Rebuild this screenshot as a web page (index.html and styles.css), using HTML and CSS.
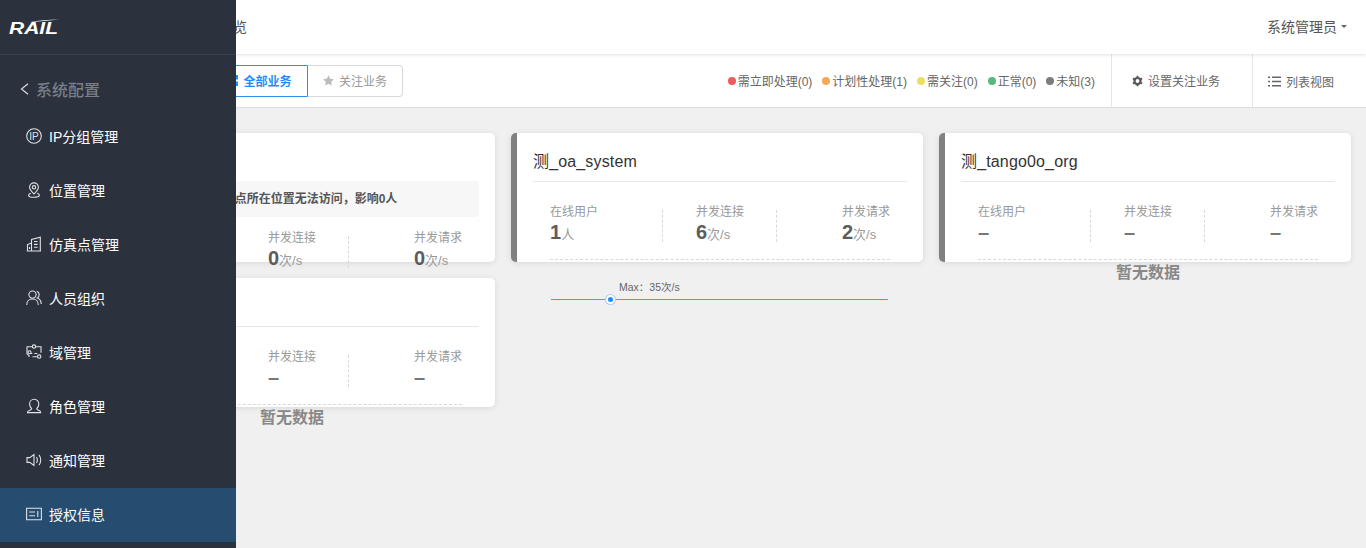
FILE: index.html
```html
<!DOCTYPE html>
<html lang="zh-CN">
<head>
<meta charset="utf-8">
<title>业务总览</title>
<link rel="stylesheet" href="styles.css">
</head>
<body>
<div class="page">
  <header class="topbar">
    <div class="crumb">业务总览</div>
    <div class="user">系统管理员<span class="caret"></span></div>
  </header>
  <section class="toolbar">
    <div class="tabs">
      <div class="tab tab-active">
        <svg class="tab-icon" viewBox="0 0 12 12"><path fill="#1f8efa" d="M0 0h5v5H0zM7 0h5v5H7zM0 7h5v5H0zM7 7h5v5H7z"/></svg>全部业务
      </div>
      <div class="tab">
        <svg class="tab-icon" viewBox="0 0 12 12"><path fill="#bbb" d="M6 .4l1.800 3.700 4 .6-2.900 2.800.7 4L6 9.600l-3.600 1.900.7-4L.2 4.700l4-.6z"/></svg>关注业务
      </div>
    </div>
    <div class="legend">
      <span class="legend-item"><i class="dot dot-red"></i>需立即处理(0)</span>
      <span class="legend-item"><i class="dot dot-orange"></i>计划性处理(1)</span>
      <span class="legend-item"><i class="dot dot-yellow"></i>需关注(0)</span>
      <span class="legend-item"><i class="dot dot-green"></i>正常(0)</span>
      <span class="legend-item"><i class="dot dot-grey"></i>未知(3)</span>
    </div>
    <div class="action action-settings">
      <svg class="action-icon gear" viewBox="0 0 12 12"><circle cx="6" cy="6" r="3.300" fill="none" stroke="#555" stroke-width="2.400"/><path stroke="#555" stroke-width="2" d="M6 .2v2M6 9.800v2M1 3.100l1.700 1M9.300 7.900l1.700 1M1 8.900l1.700-1M9.300 4.100l1.700-1"/></svg>设置关注业务
    </div>
    <div class="action action-list">
      <svg class="action-icon list" viewBox="0 0 13 11"><path stroke="#666" stroke-width="1.400" d="M0 1.200h2M4 1.200h9M0 5.500h2M4 5.500h9M0 9.800h2M4 9.800h9"/></svg>列表视图
    </div>
  </section>
  <main class="cards">
    <article class="card">
      <div class="card-title card-title-plain"></div>
      <div class="alert">1个仿真点所在位置无法访问，影响0人</div>
      <div class="stats stats-after-alert">
        <div class="stat"><div class="stat-inner"><div class="stat-label">在线用户</div><div class="stat-value">0<small>人</small></div></div></div>
        <div class="stat"><div class="stat-inner"><div class="stat-label">并发连接</div><div class="stat-value">0<small>次/s</small></div></div></div>
        <div class="stat"><div class="stat-inner"><div class="stat-label">并发请求</div><div class="stat-value">0<small>次/s</small></div></div></div>
      </div>
    </article>
    <article class="card">
      <div class="card-title">测_oa_system</div>
      <div class="stats">
        <div class="stat"><div class="stat-inner"><div class="stat-label">在线用户</div><div class="stat-value">1<small>人</small></div></div></div>
        <div class="stat"><div class="stat-inner"><div class="stat-label">并发连接</div><div class="stat-value">6<small>次/s</small></div></div></div>
        <div class="stat"><div class="stat-inner"><div class="stat-label">并发请求</div><div class="stat-value">2<small>次/s</small></div></div></div>
      </div>
      <div class="chart">
        <div class="chart-max">Max：35次/s</div>
        <div class="chart-line"><span class="chart-point"></span></div>
      </div>
    </article>
    <article class="card">
      <div class="card-title">测_tango0o_org</div>
      <div class="stats">
        <div class="stat"><div class="stat-inner"><div class="stat-label">在线用户</div><div class="stat-value stat-empty">–</div></div></div>
        <div class="stat"><div class="stat-inner"><div class="stat-label">并发连接</div><div class="stat-value stat-empty">–</div></div></div>
        <div class="stat"><div class="stat-inner"><div class="stat-label">并发请求</div><div class="stat-value stat-empty">–</div></div></div>
      </div>
      <div class="no-data">暂无数据</div>
    </article>
    <article class="card">
      <div class="card-title"></div>
      <div class="stats">
        <div class="stat"><div class="stat-inner"><div class="stat-label">在线用户</div><div class="stat-value stat-empty">–</div></div></div>
        <div class="stat"><div class="stat-inner"><div class="stat-label">并发连接</div><div class="stat-value stat-empty">–</div></div></div>
        <div class="stat"><div class="stat-inner"><div class="stat-label">并发请求</div><div class="stat-value stat-empty">–</div></div></div>
      </div>
      <div class="no-data">暂无数据</div>
    </article>
  </main>
</div>
<aside class="sidebar">
  <div class="logo">
    <svg class="logo-mark" viewBox="0 0 50 16"><path d="M20 3.200C30 1.600 40 1 50 .6 40 1.600 30 2.400 20 3.200z" fill="#fff"/><text class="logo-text" x="0" y="14.500" textLength="49" lengthAdjust="spacingAndGlyphs">RAIL</text></svg>
  </div>
  <div class="back">
    <svg class="back-icon" viewBox="0 0 9 12"><path d="M8 .8L1.500 6 8 11.200" fill="none" stroke="#d8dade" stroke-width="1.200"/></svg>系统配置
  </div>
  <nav class="nav">
    <a class="nav-item">
      <svg class="nav-icon" viewBox="0 0 16 16"><circle cx="8" cy="8" r="7.300"/><text class="icon-text" x="8" y="11.600" text-anchor="middle">IP</text></svg>IP分组管理
    </a>
    <a class="nav-item">
      <svg class="nav-icon" viewBox="0 0 16 16"><path d="M8 12C5.500 9.500 3.600 7.700 3.600 5.300a4.400 4.400 0 0 1 8.800 0c0 2.400-1.900 4.200-4.400 6.700z"/><circle cx="8" cy="5.300" r="1.700"/><path d="M4.800 11.300C3.400 11.800 2.600 12.600 2.600 13.400c0 1 2.400 1.800 5.400 1.800s5.400-.8 5.400-1.800c0-.8-.8-1.600-2.200-2.100"/></svg>位置管理
    </a>
    <a class="nav-item">
      <svg class="nav-icon" viewBox="0 0 16 16"><path d="M1.500 15V8.500l4-1.600M5.500 15V3.400l8.800-2.300V15zM.8 15h14.200M8 5.500h3.600M8 8.400h3.600M8 11.300h3.600M3.500 11v2"/></svg>仿真点管理
    </a>
    <a class="nav-item">
      <svg class="nav-icon" viewBox="0 0 16 16"><circle cx="6.500" cy="4.600" r="3.600"/><path d="M.7 15c0-3.600 2.400-6 5.800-6s5.800 2.400 5.800 6M10.700 1.300a3.600 3.600 0 0 1 .6 6.600c2.300.8 3.900 3.200 3.900 6.200"/></svg>人员组织
    </a>
    <a class="nav-item">
      <svg class="nav-icon" viewBox="0 0 16 16"><path d="M6 2.800H1v7l2 1.700v1.600M10 2.800h5v6M4.500 9.500h1.800M8.300 9.500h3M11.500 12.800H6.500"/><circle cx="8" cy="2.600" r="1.700"/><circle cx="3.500" cy="8.200" r="1.500"/><circle cx="13.200" cy="12.600" r="1.700"/></svg>域管理
    </a>
    <a class="nav-item">
      <svg class="nav-icon" viewBox="0 0 16 16"><path d="M5.700 10.600C4.400 9.500 3.600 7.800 3.600 5.900a4.600 4.600 0 0 1 9.200 0c0 1.900-.8 3.600-2.100 4.700.2 1.100 1.300 1.500 2.500 2 1 .4 1.400 1 1.400 2H1.500c0-1 .5-1.600 1.700-2 1.200-.5 2.300-.9 2.500-2z"/></svg>角色管理
    </a>
    <a class="nav-item">
      <svg class="nav-icon" viewBox="0 0 16 16"><path d="M1 5.600h2.700L8 2.500v11l-4.300-3.100H1zM10.400 5c.7.900 1 1.900 1 3s-.3 2.100-1 3M13 2.800c1.100 1.500 1.700 3.300 1.700 5.200s-.6 3.700-1.700 5.200"/></svg>通知管理
    </a>
    <a class="nav-item nav-item-active">
      <svg class="nav-icon" viewBox="0 0 16 16"><path d="M.6 2.200h14.800v11.600H.6zM3.200 6h5.800M3.200 9.800h5.800M11.800 5v6"/></svg>授权信息
    </a>
  </nav>
</aside>
</body>
</html>
```
FILE: styles.css
```css
* { box-sizing: border-box; }
html, body { margin: 0; height: 100%; }
body {
  background: #f0f0f0;
  color: #555;
  font-family: "Liberation Sans", "Noto Sans CJK SC", sans-serif;
  overflow: hidden;
}
.page { min-height: 100%; }

.topbar {
  position: relative;
  z-index: 2;
  display: flex;
  align-items: center;
  justify-content: space-between;
  height: 54px;
  padding: 0 19px 2px 191px;
  background: #fff;
  box-shadow: 0 1px 4px rgba(0, 0, 0, .12);
  font-size: 14px;
  color: #555;
}
.user { display: flex; align-items: center; }
.caret {
  width: 0;
  height: 0;
  margin-left: 4px;
  border: 3px solid transparent;
  border-top: 3px solid #666;
  border-bottom: 0;
}

.toolbar {
  display: flex;
  align-items: stretch;
  height: 54px;
  padding-left: 213px;
  background: #fff;
  border-bottom: 1px solid #dedede;
  font-size: 12px;
}
.tabs { display: flex; align-self: center; }
.tab {
  display: flex;
  align-items: center;
  justify-content: center;
  width: 95px;
  height: 32px;
  border: 1px solid #d9d9d9;
  border-left: 0;
  border-radius: 0 4px 4px 0;
  color: #999;
}
.tab-active {
  padding-right: 2px;
  border: 1px solid #2f8ef0;
  border-radius: 4px 0 0 4px;
  color: #1f8efa;
  font-weight: 700;
}
.tab-icon { width: 11px; height: 11px; margin-right: 5px; }
.legend {
  display: flex;
  align-items: center;
  gap: 10px;
  margin-left: auto;
  padding-right: 16px;
  color: #666;
}
.legend-item { display: flex; align-items: center; }
.dot {
  width: 8px;
  height: 8px;
  margin-right: 2px;
  border-radius: 50%;
}
.dot-red { background: #ee5a5f; }
.dot-orange { background: #f5a855; }
.dot-yellow { background: #ebdf62; }
.dot-green { background: #54b97a; }
.dot-grey { background: #7d7d7d; }
.action {
  display: flex;
  align-items: center;
  border-left: 1px solid #e6e6e6;
  color: #666;
}
.action-settings { width: 141px; padding-left: 20px; }
.action-list { width: 114px; padding-top: 2px; padding-left: 15px; }
.action-icon { flex: none; }
.gear { width: 11px; height: 12px; margin-right: 5px; }
.list { width: 13px; height: 11px; margin-right: 5px; margin-top: -1px; }

.cards {
  display: grid;
  grid-template-columns: repeat(3, 1fr);
  grid-auto-rows: 129px;
  gap: 16px;
  padding: 25px 15px 0 83px;
}
.card {
  height: 129px;
  padding-right: 16px;
  padding-left: 16px;
  background: #fff;
  border-left: 6px solid #808080;
  border-radius: 5px;
  box-shadow: 0 1px 6px rgba(0, 0, 0, .1);
}
.card-title {
  height: 49px;
  padding-top: 18px;
  border-bottom: 1px solid #e8e8e8;
  font-size: 16px;
  letter-spacing: .15px;
  line-height: 22px;
  color: #333;
}
.card-title-plain { height: 48px; border-bottom: 0; }
.alert {
  height: 36px;
  padding-left: 87px;
  background: #f7f7f7;
  border-radius: 3px;
  font-size: 12px;
  font-weight: 700;
  line-height: 36px;
  color: #555;
}
.stats {
  display: grid;
  grid-template-columns: repeat(3, 1fr);
  margin: 23px 17px 0;
  padding-bottom: 13px;
  border-bottom: 1px dashed #d8d8d8;
}
.stats-after-alert { margin-top: 14px; }
.stat { position: relative; display: flex; justify-content: center; height: 41px; }
.stat:first-child { justify-content: flex-start; }
.stat:last-child { justify-content: flex-end; }
.stat + .stat::before {
  content: "";
  position: absolute;
  top: 5px;
  left: -1px;
  height: 32px;
  border-left: 1px dashed #d8d8d8;
}
.stat-label { font-size: 12px; line-height: 14px; color: #999; }
.stat-value {
  margin-top: 1px;
  font-size: 20px;
  font-weight: 700;
  line-height: 24px;
  color: #5c5c5c;
}
.stat-empty { color: #777; }
.stat-value small { font-size: 13px; font-weight: 400; color: #999; }

.chart { margin: 21px 19px 0 18px; }
.chart-max { padding-left: 68px; font-size: 10.500px; line-height: 12px; color: #666; }
.chart-line { position: relative; height: 1px; margin-top: 6px; background: #4f9ff5; }
.chart-point {
  position: absolute;
  top: -4px;
  left: 55px;
  width: 9px;
  height: 9px;
  background: #1f8efa;
  border: 2px solid #fff;
  border-radius: 50%;
  box-shadow: 0 0 0 1px #a9d0f8;
}
.no-data {
  margin-top: 2px;
  font-size: 16px;
  font-weight: 700;
  line-height: 22px;
  text-align: center;
  color: #888;
}

.sidebar {
  position: absolute;
  top: 0;
  left: 0;
  z-index: 3;
  width: 236px;
  height: 100%;
  background: #2b323e;
}
.logo {
  display: flex;
  align-items: center;
  height: 55px;
  padding-left: 9px;
  border-bottom: 1px solid #3a414d;
}
.logo-mark { width: 50px; height: 16px; overflow: visible; }
.logo-text { font-size: 17px; font-weight: 700; font-style: italic; fill: #fff; font-family: "Liberation Sans", sans-serif; }
.back {
  display: flex;
  align-items: center;
  height: 55px;
  padding-top: 12px;
  padding-left: 20px;
  font-size: 16px;
  font-weight: 500;
  color: #7a7f87;
}
.back-icon { width: 9px; height: 12px; margin-right: 7px; }
.nav-item {
  display: flex;
  align-items: center;
  height: 54px;
  padding-bottom: 2px;
  padding-left: 26px;
  font-size: 14px;
  font-weight: 400;
  color: #fff;
}
.nav-item-active { background: #264c70; }
.nav-icon {
  flex: none;
  width: 16px;
  height: 16px;
  margin-right: 7px;
  fill: none;
  stroke: #e0e2e5;
  stroke-width: 1.100;
}
.icon-text {
  fill: #e0e2e5;
  stroke: none;
  font-size: 10px;
  font-family: "Liberation Sans", sans-serif;
}
```
